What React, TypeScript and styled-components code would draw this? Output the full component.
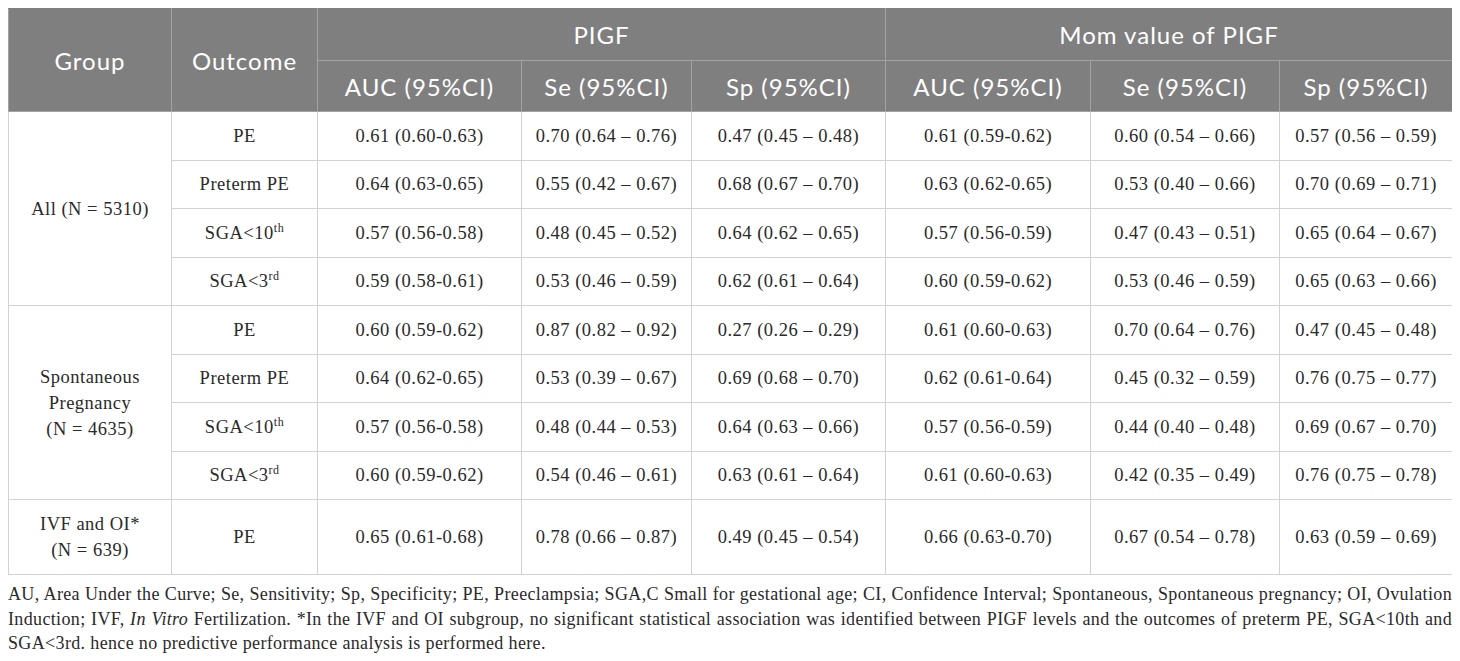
import React from 'react'
import styled, { createGlobalStyle } from 'styled-components'

const GlobalStyle = createGlobalStyle`
  body {
    margin: 8px;
    background: #ffffff;
    font-family: "Liberation Serif", "Times New Roman", serif;
  }
`

const Wrapper = styled.div`
  width: 1444px;
`

const Table = styled.table`
  width: 1444px;
  table-layout: fixed;
  border-collapse: collapse;
  border: 1px solid #cfcfcf;
`

const HeadCell = styled.th<{ $h?: number }>`
  background: #7f7f7f;
  color: #ffffff;
  font-family: Lato, "Open Sans", sans-serif;
  font-weight: 400;
  font-size: 24px;
  letter-spacing: 1px;
  text-align: center;
  vertical-align: middle;
  height: ${({ $h }) => $h || 50}px;
  padding: 0 4px;
  border: 1px solid #a3a3a3;
  border-top-color: #7f7f7f;
  white-space: nowrap;
`

const Cell = styled.td<{ $h?: number }>`
  height: ${({ $h }) => $h || 47.5}px;
  padding: 0 4px;
  text-align: center;
  vertical-align: middle;
  font-size: 18.5px;
  letter-spacing: 0.5px;
  color: #2a2a2a;
  border: 1px solid #d2d2d2;
  line-height: 26px;
  white-space: nowrap;
`

const GroupCell = styled(Cell)`
  white-space: normal;
`

const Sup = styled.sup`
  font-size: 12px;
  line-height: 0;
  vertical-align: 7px;
`

const Note = styled.p`
  margin: 7px 0 0;
  font-size: 18px;
  letter-spacing: 0.35px;
  line-height: 24.5px;
  color: #2a2a2a;
  text-align: justify;
`

type Row = { outcome: React.ReactNode; vals: string[] }
type Group = { label: React.ReactNode; rows: Row[]; tall?: boolean }

const sga10 = <>SGA&lt;10<Sup>th</Sup></>
const sga3 = <>SGA&lt;3<Sup>rd</Sup></>

const groups: Group[] = [
  {
    label: 'All (N = 5310)',
    rows: [
      { outcome: 'PE', vals: ['0.61 (0.60-0.63)', '0.70 (0.64 – 0.76)', '0.47 (0.45 – 0.48)', '0.61 (0.59-0.62)', '0.60 (0.54 – 0.66)', '0.57 (0.56 – 0.59)'] },
      { outcome: 'Preterm PE', vals: ['0.64 (0.63-0.65)', '0.55 (0.42 – 0.67)', '0.68 (0.67 – 0.70)', '0.63 (0.62-0.65)', '0.53 (0.40 – 0.66)', '0.70 (0.69 – 0.71)'] },
      { outcome: sga10, vals: ['0.57 (0.56-0.58)', '0.48 (0.45 – 0.52)', '0.64 (0.62 – 0.65)', '0.57 (0.56-0.59)', '0.47 (0.43 – 0.51)', '0.65 (0.64 – 0.67)'] },
      { outcome: sga3, vals: ['0.59 (0.58-0.61)', '0.53 (0.46 – 0.59)', '0.62 (0.61 – 0.64)', '0.60 (0.59-0.62)', '0.53 (0.46 – 0.59)', '0.65 (0.63 – 0.66)'] },
    ],
  },
  {
    label: <>Spontaneous<br />Pregnancy<br />(N = 4635)</>,
    rows: [
      { outcome: 'PE', vals: ['0.60 (0.59-0.62)', '0.87 (0.82 – 0.92)', '0.27 (0.26 – 0.29)', '0.61 (0.60-0.63)', '0.70 (0.64 – 0.76)', '0.47 (0.45 – 0.48)'] },
      { outcome: 'Preterm PE', vals: ['0.64 (0.62-0.65)', '0.53 (0.39 – 0.67)', '0.69 (0.68 – 0.70)', '0.62 (0.61-0.64)', '0.45 (0.32 – 0.59)', '0.76 (0.75 – 0.77)'] },
      { outcome: sga10, vals: ['0.57 (0.56-0.58)', '0.48 (0.44 – 0.53)', '0.64 (0.63 – 0.66)', '0.57 (0.56-0.59)', '0.44 (0.40 – 0.48)', '0.69 (0.67 – 0.70)'] },
      { outcome: sga3, vals: ['0.60 (0.59-0.62)', '0.54 (0.46 – 0.61)', '0.63 (0.61 – 0.64)', '0.61 (0.60-0.63)', '0.42 (0.35 – 0.49)', '0.76 (0.75 – 0.78)'] },
    ],
  },
  {
    label: <>IVF and OI*<br />(N = 639)</>,
    tall: true,
    rows: [
      { outcome: 'PE', vals: ['0.65 (0.61-0.68)', '0.78 (0.66 – 0.87)', '0.49 (0.45 – 0.54)', '0.66 (0.63-0.70)', '0.67 (0.54 – 0.78)', '0.63 (0.59 – 0.69)'] },
    ],
  },
]

const widths = [163, 146, 204, 170, 194, 205, 189, 173]

const App: React.FC = () => {
  return (
    <>
      <GlobalStyle />
      <Wrapper>
        <Table>
          <colgroup>
            {widths.map((w, i) => (
              <col key={i} style={{ width: w }} />
            ))}
          </colgroup>
          <thead>
            <tr>
              <HeadCell rowSpan={2}>Group</HeadCell>
              <HeadCell rowSpan={2}>Outcome</HeadCell>
              <HeadCell colSpan={3} $h={51}>PIGF</HeadCell>
              <HeadCell colSpan={3} $h={51}>Mom value of PIGF</HeadCell>
            </tr>
            <tr>
              <HeadCell>AUC (95%CI)</HeadCell>
              <HeadCell>Se (95%CI)</HeadCell>
              <HeadCell>Sp (95%CI)</HeadCell>
              <HeadCell>AUC (95%CI)</HeadCell>
              <HeadCell>Se (95%CI)</HeadCell>
              <HeadCell>Sp (95%CI)</HeadCell>
            </tr>
          </thead>
          <tbody>
            {groups.map((g, gi) =>
              g.rows.map((r, ri) => (
                <tr key={`${gi}-${ri}`}>
                  {ri === 0 && (
                    <GroupCell rowSpan={g.rows.length} $h={g.tall ? 74 : undefined}>
                      {g.label}
                    </GroupCell>
                  )}
                  <Cell $h={g.tall ? 74 : undefined}>{r.outcome}</Cell>
                  {r.vals.map((v, vi) => (
                    <Cell key={vi} $h={g.tall ? 74 : undefined}>{v}</Cell>
                  ))}
                </tr>
              ))
            )}
          </tbody>
        </Table>
        <Note>
          AU, Area Under the Curve; Se, Sensitivity; Sp, Specificity; PE, Preeclampsia; SGA,C Small for gestational age; CI, Confidence Interval; Spontaneous, Spontaneous pregnancy; OI, Ovulation Induction; IVF, <i>In Vitro</i> Fertilization. *In the IVF and OI subgroup, no significant statistical association was identified between PIGF levels and the outcomes of preterm PE, SGA&lt;10th and SGA&lt;3rd. hence no predictive performance analysis is performed here.
        </Note>
      </Wrapper>
    </>
  )
}

export default App
